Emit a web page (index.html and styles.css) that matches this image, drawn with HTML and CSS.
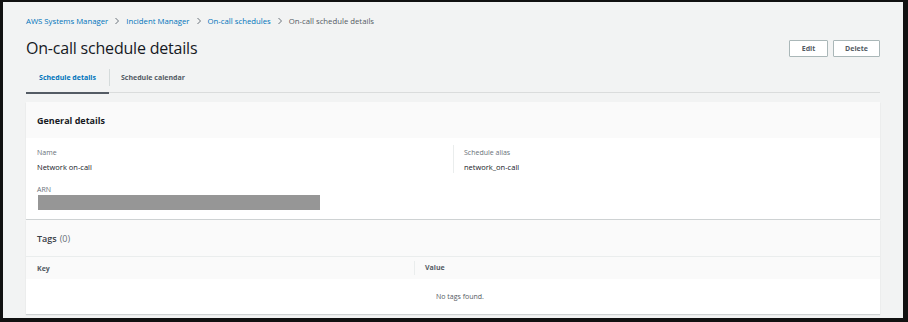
FILE: index.html
```html
<!DOCTYPE html>
<html>
<head>
<meta charset="utf-8">
<link rel="stylesheet" href="styles.css">
</head>
<body>
<div class="frame">
  <nav class="crumbs">
    <a class="crumb">AWS Systems Manager</a>
    <svg class="chev" viewBox="0 0 8 10" width="6" height="8"><path d="M2 1l4 4-4 4" fill="none" stroke="#687078" stroke-width="1.3"/></svg>
    <a class="crumb">Incident Manager</a>
    <svg class="chev" viewBox="0 0 8 10" width="6" height="8"><path d="M2 1l4 4-4 4" fill="none" stroke="#687078" stroke-width="1.3"/></svg>
    <a class="crumb">On-call schedules</a>
    <svg class="chev" viewBox="0 0 8 10" width="6" height="8"><path d="M2 1l4 4-4 4" fill="none" stroke="#687078" stroke-width="1.3"/></svg>
    <span class="crumb current">On-call schedule details</span>
  </nav>

  <header class="head">
    <h1 class="title">On-call schedule details</h1>
    <div class="actions">
      <button class="btn btn-edit">Edit</button>
      <button class="btn btn-delete">Delete</button>
    </div>
  </header>

  <div class="tabs">
    <div class="tab active">Schedule details</div>
    <div class="tab-sep"></div>
    <div class="tab">Schedule calendar</div>
  </div>

  <section class="card">
    <div class="card-head">General details</div>
    <div class="card-body">
      <div class="col">
        <div class="field">
          <div class="label">Name</div>
          <div class="value">Network on-call</div>
        </div>
        <div class="field field-arn">
          <div class="label">ARN</div>
          <div class="redact"></div>
        </div>
      </div>
      <div class="col col-right">
        <div class="field">
          <div class="label">Schedule alias</div>
          <div class="value">network_on-call</div>
        </div>
      </div>
    </div>
  </section>

  <section class="card tags">
    <div class="card-head light"><span class="tags-title">Tags</span><span class="count">(0)</span></div>
    <div class="thead">
      <div class="th th-key">Key</div>
      <div class="th th-sep">Value</div>
    </div>
    <div class="empty">No tags found.</div>
  </section>
</div>
</body>
</html>
```

FILE: styles.css
```css
* { box-sizing: border-box; }
html, body { margin: 0; padding: 0; }
body {
  font-family: "Open Sans", "Noto Sans", sans-serif;
  color: #16191f;
  width: 908px;
  height: 322px;
  background: #000;
}
.frame {
  width: 908px;
  height: 322px;
  border-style: solid;
  border-color: #111;
  border-width: 2px 5px 4px 3px;
  background: #f2f3f3;
  padding: 0 23px;
  overflow: hidden;
}
.crumbs {
  display: flex;
  align-items: center;
  gap: 5px;
  height: 36px;
  font-size: 7.75px;
  padding-top: 1px;
}
.crumb { color: #0073bb; }
.crumb.current { color: #545b64; }
.chev { margin: 0 1px; }
.head {
  display: flex;
  align-items: center;
  justify-content: space-between;
  height: 20px;
}
.title {
  margin: 0;
  font-size: 16px;
  font-weight: 400;
  letter-spacing: -0.2px;
}
.actions { display: flex; gap: 5px; }
.btn {
  font-family: inherit;
  font-size: 7px;
  font-weight: 700;
  color: #545b64;
  background: #fff;
  border: 1px solid #aab7b8;
  height: 17px;
  padding: 0;
  border-radius: 1px;
}
.btn-edit { width: 39px; }
.btn-delete { width: 47px; }
.tabs {
  margin-top: 9px;
  display: flex;
  align-items: flex-start;
  border-bottom: 1px solid #dadcdc;
  height: 26px;
}
.tab {
  font-size: 7px;
  font-weight: 700;
  color: #545b64;
  padding: 0 11px;
  height: 26px;
  line-height: 21px;
}
.tab.active {
  color: #0073bb;
  border-bottom: 2px solid #545b64;
  width: 83px;
  text-align: center;
  padding: 0;
  margin-bottom: -1px;
  height: 27px;
}
.tab-sep { width: 1px; height: 17px; margin-top: 2px; background: #d5dbdb; }
.card {
  margin-top: 9px;
  background: #fff;
  box-shadow: 0 1px 1px rgba(0,28,36,0.15);
}
.card-head {
  background: #fafafa;
  height: 36px;
  display: flex;
  align-items: center;
  padding: 0 11px;
  font-size: 9px;
  font-weight: 700;
}
.card-body {
  display: grid;
  grid-template-columns: 1fr 1fr;
  padding: 7px 11px 0 11px;
  height: 81px;
}
.col { display: flex; flex-direction: column; padding-top: 3px; }
.col-right {
  border-left: 1px solid #eaeded;
  padding-left: 10px;
  align-self: start;
  height: 28px;
}
.field { display: flex; flex-direction: column; gap: 4px; }
.field-arn { margin-top: 13px; gap: 0; }
.label { font-size: 7px; line-height: 10px; color: #687078; }
.value { font-size: 7.5px; line-height: 10px; color: #16191f; }
.redact {
  width: 282px;
  height: 15px;
  background: #969696;
  margin-left: 1px;
}
.tags { margin-top: 1px; }
.card-head.light { font-weight: 400; font-size: 9px; gap: 3px; }
.tags-title { font-weight: 600; color: #3b4048; }
.count { color: #687078; }
.thead {
  display: flex;
  background: #fafafa;
  border-top: 1px solid #eaeded;
  height: 23px;
  align-items: center;
}
.th {
  font-size: 7px;
  font-weight: 700;
  color: #545b64;
  padding: 0 11px;
}
.th-key { width: 388px; }
.th-sep { border-left: 1px solid #eaeded; padding-left: 10px; line-height: 14px; }
.empty {
  height: 35px;
  display: flex;
  align-items: center;
  justify-content: center;
  font-size: 7px;
  color: #545b64;
  padding-left: 14px;
}
```
